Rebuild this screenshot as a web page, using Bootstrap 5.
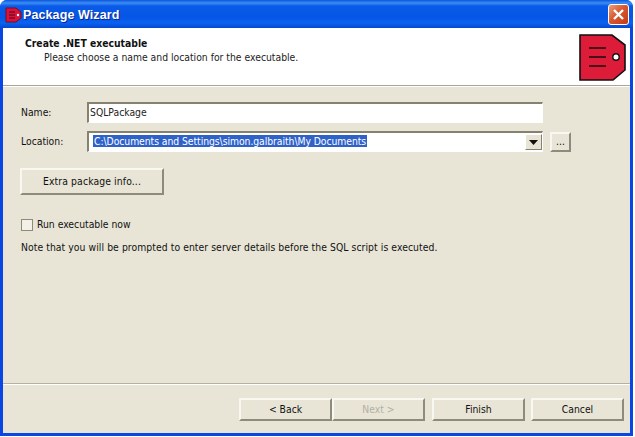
<!DOCTYPE html>
<html lang="en">
<head>
<meta charset="utf-8">
<title>Package Wizard</title>
<link href="https://cdn.jsdelivr.net/npm/bootstrap@5.3.0/dist/css/bootstrap.min.css" rel="stylesheet">
<style>
html,body{margin:0;background:#fff;height:437px;overflow:hidden}
body{font-family:"DejaVu Sans Condensed","Liberation Sans",Arial,sans-serif;font-size:10.3px;line-height:13px;color:#111}
.xp-window{width:633px;height:436px;background:#0a45e6;border-radius:7px 7px 0 0;padding:0 3px 3px 3px}
.xp-title{height:28px;margin:0 -3px;padding:0 4px 0 5px;border-radius:7px 7px 0 0;background:linear-gradient(180deg,#0a55dc 0,#3d8ef5 3px,#0a5be8 6px,#0655e6 17px,#0a62f0 23px,#0547d0 28px);color:#fff}
.xp-title-text{font-family:"Liberation Sans",Arial,sans-serif;font-size:12.5px;font-weight:700;text-shadow:1px 1px 0 #0a2a90;margin:2px 0 0 1px;letter-spacing:.1px}
.xp-close{width:21px;height:21px;border:1px solid #fff;border-radius:3px;background:linear-gradient(135deg,#e8a080,#d9582f 45%,#c23c14)}
.xp-body{height:405px;background:#e8e5d7}
.xp-head{height:58px;background:#fff;border-bottom:1px solid #a9a698;box-shadow:0 1px 0 #fff;padding:9px 4px 0 22px}
.xp-head-title{font-weight:700;color:#111}
.xp-head-sub{padding-left:19px;margin-top:1px;color:#222}
.xp-tag{margin-top:-3px}
.xp-main{padding:16px 0 0 17px;flex:1 1 auto}
.xp-label{width:67px;padding-left:1px}
.xp-row{height:21px;margin-bottom:8px}
.xp-input{width:456px;height:21px;background:#fff;border-style:solid;border-width:2px 1px 1px 2px;border-color:#85826f #fff #fff #85826f;padding:1px 0 0 1px;font-size:10.3px;line-height:15px;color:#222}
.xp-sel{background:#2f62c9;color:#fff;padding:0 1px;margin-left:3px;letter-spacing:-.05px}
.xp-drop{width:17px;height:16px;background:#e8e5d7;border:1px solid;border-color:#fff #85826f #85826f #fff}
.xp-btn{background:#e8e5d7;border:2px solid;border-color:#f8f7f1 #8e8b7c #8e8b7c #f8f7f1;border-radius:0;font-size:10.3px;line-height:13px;color:#111;padding:0;display:flex;align-items:center;justify-content:center}
.xp-btn:disabled{color:#b3b0a2;background:#e8e5d7;border-color:#f8f7f1 #8e8b7c #8e8b7c #f8f7f1;opacity:1}
.xp-more{width:21px;height:20px;margin-left:7px}
.xp-extra{width:144px;height:27px;margin-top:16px;letter-spacing:.12px}
.xp-checkline{margin-top:23px;gap:4px}
.xp-check{width:12px;height:12px;background:#f2f0e7;border:1px solid #8e8b7c;margin-left:1px}
.xp-note{margin:10px 0 0 1px;letter-spacing:.07px}
.xp-foot{height:50px;border-top:1px solid #b5b2a4;box-shadow:inset 0 1px 0 #fff;padding:14px 6px 0 0}
.xp-nav{width:93px;height:23px}
.xp-gap-finish{margin-left:7px}
.xp-gap-cancel{margin-left:6px}
</style>
</head>
<body>
<div class="xp-window d-flex flex-column">
  <div class="xp-title d-flex align-items-center">
    <svg width="17" height="17" viewBox="0 0 17 17"><path d="M1 2H11L16 6V12L11 16H1Z" fill="#d8123c" stroke="#7a0a20"/><path d="M4 6H10M4 9H10M4 12H10" stroke="#4a0a18" stroke-width="1.2"/><circle cx="13" cy="9" r="1.2" fill="#fff"/></svg>
    <span class="xp-title-text flex-grow-1">Package Wizard</span>
    <div class="xp-close d-flex align-items-center justify-content-center">
      <svg width="13" height="13" viewBox="0 0 13 13"><path d="M2 2L11 11M11 2L2 11" stroke="#fff" stroke-width="2.4"/></svg>
    </div>
  </div>
  <div class="xp-body d-flex flex-column">
    <div class="xp-head d-flex justify-content-between">
      <div>
        <div class="xp-head-title">Create .NET executable</div>
        <div class="xp-head-sub">Please choose a name and location for the executable.</div>
      </div>
      <svg class="xp-tag" width="47" height="47" viewBox="0 0 47 47"><path d="M1 1H33L46 11V36L34 46H1Z" fill="#dc1c38" stroke="#111" stroke-width="1.6"/><path d="M10 14H27M10 23H27M10 32H27" stroke="#4a0f18" stroke-width="2"/><circle cx="37" cy="23" r="3.2" fill="#fff" stroke="#111" stroke-width="1.4"/></svg>
    </div>
    <div class="xp-main">
      <div class="xp-row d-flex align-items-center">
        <div class="xp-label">Name:</div>
        <div class="xp-input">SQLPackage</div>
      </div>
      <div class="xp-row d-flex align-items-center">
        <div class="xp-label">Location:</div>
        <div class="xp-input d-flex justify-content-between"><span><span class="xp-sel">C:\Documents and Settings\simon.galbraith\My Documents</span></span>
          <div class="xp-drop d-flex align-items-center justify-content-center"><svg width="9" height="5" viewBox="0 0 9 5"><path d="M0 0H9L4.5 5Z" fill="#111"/></svg></div>
        </div>
        <button type="button" class="xp-btn xp-more">...</button>
      </div>
      <button type="button" class="xp-btn xp-extra">Extra package info...</button>
      <div class="xp-checkline d-flex align-items-center"><div class="xp-check"></div><span>Run executable now</span></div>
      <p class="xp-note">Note that you will be prompted to enter server details before the SQL script is executed.</p>
    </div>
    <div class="xp-foot d-flex justify-content-end">
      <button type="button" class="xp-btn xp-nav">&lt; Back</button>
      <button type="button" class="xp-btn xp-nav" disabled>Next &gt;</button>
      <button type="button" class="xp-btn xp-nav xp-gap-finish">Finish</button>
      <button type="button" class="xp-btn xp-nav xp-gap-cancel">Cancel</button>
    </div>
  </div>
</div>
</body>
</html>
